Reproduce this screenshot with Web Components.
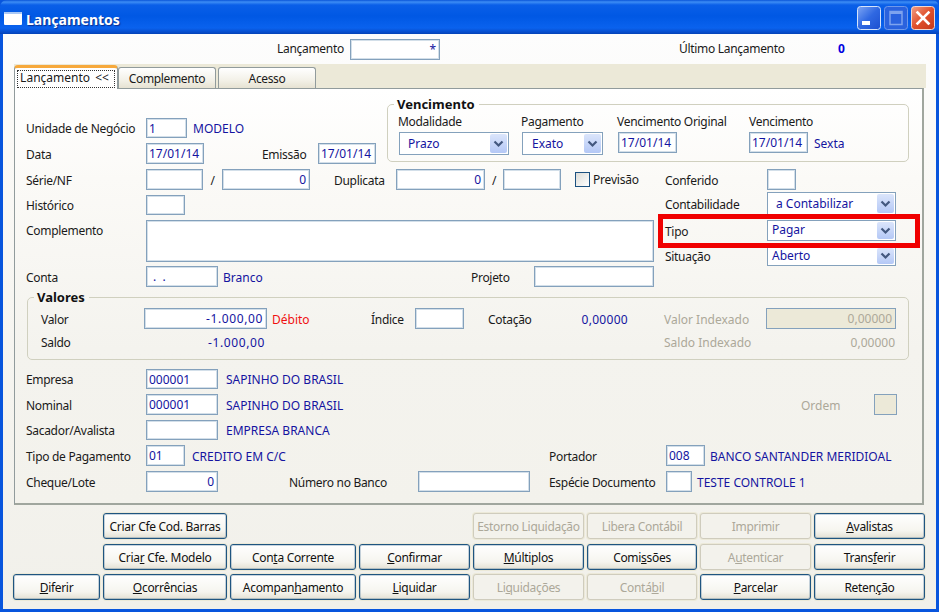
<!DOCTYPE html>
<html lang="pt">
<head>
<meta charset="utf-8">
<title>Lançamentos</title>
<style>
  html, body { margin: 0; padding: 0; background: #0855dd; }
  body { width: 939px; height: 612px; overflow: hidden; font: 12px "Noto Sans", "Liberation Sans", sans-serif; color: #1a1a1a; }
</style>
</head>
<body>
<xp-window caption="Lançamentos">
  <xp-row h="30" style="padding-left:274px">
    <xp-lbl w="73" style="padding-top:0">Lançamento</xp-lbl>
    <xp-field w="90" h="21" align="right">*</xp-field>
    <xp-lbl w="159" style="margin-left:239px;padding-top:0">Último Lançamento</xp-lbl>
    <xp-lbl tone="strong" style="padding-top:0">0</xp-lbl>
  </xp-row>

  <xp-tabs>
    <xp-tab active>Lançamento &lt;&lt;</xp-tab>
    <xp-tab>Complemento</xp-tab>
    <xp-tab>Acesso</xp-tab>
  </xp-tabs>

  <xp-panel>
    <xp-col style="flex-direction:row;height:71px">
      <xp-col w="361" style="padding-top:20px;gap:5px">
        <xp-row h="20"><xp-lbl w="120">Unidade de Negócio</xp-lbl><xp-field w="41">1</xp-field><xp-lbl tone="blue" style="margin-left:6px">MODELO</xp-lbl></xp-row>
        <xp-row h="21"><xp-lbl w="120">Data</xp-lbl><xp-field w="58">17/01/14</xp-field><xp-lbl w="56" style="margin-left:58px">Emissão</xp-lbl><xp-field w="58">17/01/14</xp-field></xp-row>
      </xp-col>
      <xp-group legend="Vencimento" w="522" h="64">
        <xp-row style="padding:1px 0 0 10px;align-items:flex-start">
          <xp-col w="123"><xp-lbl h="20">Modalidade</xp-lbl><xp-select w="110" h="23" indent="8" style="margin-left:1px">Prazo</xp-select></xp-col>
          <xp-col w="96"><xp-lbl h="20">Pagamento</xp-lbl><xp-select w="81" h="23" indent="9" style="margin-left:1px">Exato</xp-select></xp-col>
          <xp-col w="132"><xp-lbl h="20">Vencimento Original</xp-lbl><xp-field w="59" h="21" style="margin-left:1px">17/01/14</xp-field></xp-col>
          <xp-col><xp-lbl h="20">Vencimento</xp-lbl><xp-row><xp-field w="59" h="21">17/01/14</xp-field><xp-lbl tone="blue" style="margin-left:6px">Sexta</xp-lbl></xp-row></xp-col>
        </xp-row>
      </xp-group>
    </xp-col>

    <xp-col style="flex-direction:row;gap:11px">
      <xp-col w="628" style="gap:5px">
        <xp-row h="21">
          <xp-lbl w="120">Série/NF</xp-lbl><xp-field w="57"></xp-field><xp-lbl w="19" align="center">/</xp-lbl><xp-field w="88" align="right">0</xp-field>
          <xp-lbl w="62" style="margin-left:24px">Duplicata</xp-lbl><xp-field w="89" align="right">0</xp-field><xp-lbl w="18" align="center">/</xp-lbl><xp-field w="58"></xp-field>
          <xp-check style="margin-left:14px">Previsão</xp-check>
        </xp-row>
        <xp-row h="20"><xp-lbl w="120">Histórico</xp-lbl><xp-field w="39"></xp-field></xp-row>
        <xp-row h="42" style="align-items:flex-start"><xp-lbl w="120" h="20" style="margin-top:1px">Complemento</xp-lbl><xp-field w="508" h="42"></xp-field></xp-row>
        <xp-row h="21" style="margin-top:-1px">
          <xp-lbl w="120">Conta</xp-lbl><xp-field w="72" indent="6">.&nbsp;&nbsp;.</xp-field><xp-lbl tone="blue" w="248" style="margin-left:5px">Branco</xp-lbl>
          <xp-lbl w="63">Projeto</xp-lbl><xp-field w="120"></xp-field>
        </xp-row>
      </xp-col>
      <xp-col w="231">
        <xp-row h="21"><xp-lbl w="102">Conferido</xp-lbl><xp-field w="29"></xp-field></xp-row>
        <xp-row h="23" style="margin-top:2px"><xp-lbl w="102">Contabilidade</xp-lbl><xp-select w="129" h="23" indent="8">a Contabilizar</xp-select></xp-row>
        <xp-row h="21" style="margin-top:5px;position:relative"><xp-lbl w="102">Tipo</xp-lbl><xp-select w="129" h="21" indent="4" lift>Pagar</xp-select><xp-callout></xp-callout></xp-row>
        <xp-row h="20" style="margin-top:5px"><xp-lbl w="102">Situação</xp-lbl><xp-select w="129" h="20" indent="4" lift>Aberto</xp-select></xp-row>
      </xp-col>
    </xp-col>

    <xp-group legend="Valores" w="882" h="69" style="margin:4px 0 0 1px">
      <xp-col style="padding:4px 0 0 13px;gap:3px">
        <xp-row h="21">
          <xp-lbl w="103">Valor</xp-lbl><xp-field w="123" align="right" style="letter-spacing:.6px">-1.000,00</xp-field><xp-lbl tone="red" w="99" style="margin-left:5px">Débito</xp-lbl>
          <xp-lbl w="44">Índice</xp-lbl><xp-field w="49"></xp-field>
          <xp-lbl w="60" style="margin-left:24px">Cotação</xp-lbl><xp-lbl tone="blue" w="80" align="right" style="letter-spacing:.3px">0,00000</xp-lbl>
          <xp-lbl tone="off" w="102" style="margin-left:36px">Valor Indexado</xp-lbl><xp-field w="130" align="right" off>0,00000</xp-field>
        </xp-row>
        <xp-row h="20">
          <xp-lbl w="103">Saldo</xp-lbl><xp-lbl tone="blue" w="121" align="right" style="letter-spacing:.6px">-1.000,00</xp-lbl>
          <xp-lbl tone="off" w="102" style="margin-left:399px">Saldo Indexado</xp-lbl><xp-lbl tone="off" w="129" align="right">0,00000</xp-lbl>
        </xp-row>
      </xp-col>
    </xp-group>

    <xp-col style="margin-top:9px;gap:5px">
      <xp-row h="20"><xp-lbl w="120">Empresa</xp-lbl><xp-field w="72">000001</xp-field><xp-lbl tone="blue" style="margin-left:8px">SAPINHO DO BRASIL</xp-lbl></xp-row>
      <xp-row h="21"><xp-lbl w="120">Nominal</xp-lbl><xp-field w="72">000001</xp-field><xp-lbl tone="blue" w="575" style="margin-left:8px">SAPINHO DO BRASIL</xp-lbl><xp-lbl tone="off" w="73">Ordem</xp-lbl><xp-field w="23" off></xp-field></xp-row>
      <xp-row h="20"><xp-lbl w="120">Sacador/Avalista</xp-lbl><xp-field w="72"></xp-field><xp-lbl tone="blue" style="margin-left:8px">EMPRESA BRANCA</xp-lbl></xp-row>
      <xp-row h="21"><xp-lbl w="120">Tipo de Pagamento</xp-lbl><xp-field w="39">01</xp-field><xp-lbl tone="blue" w="357" style="margin-left:7px">CREDITO EM C/C</xp-lbl><xp-lbl w="117">Portador</xp-lbl><xp-field w="39">008</xp-field><xp-lbl tone="blue" style="margin-left:5px">BANCO SANTANDER MERIDIOAL</xp-lbl></xp-row>
      <xp-row h="21"><xp-lbl w="120">Cheque/Lote</xp-lbl><xp-field w="72" align="right">0</xp-field><xp-lbl w="129" style="margin-left:71px">Número no Banco</xp-lbl><xp-field w="112"></xp-field><xp-lbl w="117" style="margin-left:19px">Espécie Documento</xp-lbl><xp-field w="26"></xp-field><xp-lbl tone="blue" style="margin-left:5px">TESTE CONTROLE 1</xp-lbl></xp-row>
    </xp-col>
  </xp-panel>

  <xp-actions>
    <xp-btn style="grid-column:2">Criar Cfe Cod. Barras</xp-btn>
    <xp-btn off style="grid-column:5">Estorno Liquidação</xp-btn>
    <xp-btn off>Libera Contábil</xp-btn>
    <xp-btn off>Imprimir</xp-btn>
    <xp-btn><u>A</u>valistas</xp-btn>

    <xp-btn style="grid-column:2">Cria<u>r</u> Cfe. Modelo</xp-btn>
    <xp-btn>Con<u>t</u>a Corrente</xp-btn>
    <xp-btn><u>C</u>onfirmar</xp-btn>
    <xp-btn><u>M</u>últiplos</xp-btn>
    <xp-btn>Comi<u>s</u>sões</xp-btn>
    <xp-btn off>A<u>u</u>tenticar</xp-btn>
    <xp-btn>Trans<u>f</u>erir</xp-btn>

    <xp-btn><u>D</u>iferir</xp-btn>
    <xp-btn><u>O</u>corrências</xp-btn>
    <xp-btn>Acompan<u>h</u>amento</xp-btn>
    <xp-btn><u>L</u>iquidar</xp-btn>
    <xp-btn off>Li<u>q</u>uidações</xp-btn>
    <xp-btn off>Contá<u>b</u>il</xp-btn>
    <xp-btn><u>P</u>arcelar</xp-btn>
    <xp-btn>Reten<u>ç</u>ão</xp-btn>
  </xp-actions>
</xp-window>

<script>
class XpBase extends HTMLElement {
  constructor() {
    super();
    this.shadowDOM = this.attachShadow({ mode: "open" });
  }

  connectedCallback() {
    if (this.hasAttribute("w")) this.style.width = this.getAttribute("w") + "px";
    if (this.hasAttribute("h")) this.style.height = this.getAttribute("h") + "px";
    this.render();
  }
}

class XpWindow extends XpBase {
  render() {
    this.shadowDOM.innerHTML = `
      <style>
        :host { display: flex; flex-direction: column; width: 939px; height: 612px; box-sizing: border-box; }
        .bar {
          height: 34px; flex: none; display: flex; align-items: center; padding: 2px 4px 0 4px; box-sizing: border-box;
          border-radius: 7px 7px 0 0;
          background: linear-gradient(#0a55d8 0, #3d8df5 2px, #0a5fe8 5px, #0058e4 16px, #0a62ee 28px, #0648c4 33px, #0342b4 34px);
        }
        .icon { width: 18px; height: 13px; flex: none; }
        .cap { margin: 2px 0 0 4px; font: bold 14px "Noto Sans", sans-serif; color: #fff; text-shadow: 1px 1px 1px #0a2f8f; flex: 1; }
        .ctl { width: 24px; height: 24px; margin-left: 3px; flex: none; display: block; }
        .client {
          flex: 1; margin: 0 3px 3px 3px; display: flex; flex-direction: column;
          background: linear-gradient(#fdfdfd 0, #faf9f6 120px, #f4f3ee 400px, #f1f0ea 100%);
        }
      </style>
      <div class="bar">
        <svg class="icon" viewBox="0 0 18 13"><rect width="18" height="13" rx="1" fill="#fff"/><rect width="18" height="2" rx="1" fill="#a9c8f5"/></svg>
        <span class="cap">${this.getAttribute("caption")}</span>
        <svg class="ctl" viewBox="0 0 24 24">
          <defs><linearGradient id="m" x1="0" y1="0" x2="1" y2="1"><stop offset="0" stop-color="#7ea6f4"/><stop offset=".5" stop-color="#2f68e2"/><stop offset="1" stop-color="#1c4fd0"/></linearGradient></defs>
          <rect x=".5" y=".5" width="23" height="23" rx="3" fill="url(#m)" stroke="#d6e4fb"/><rect x="5" y="15" width="8" height="4" fill="#fff"/>
        </svg>
        <svg class="ctl" viewBox="0 0 24 24">
          <rect x=".5" y=".5" width="23" height="23" rx="3" fill="#2a62de" stroke="#6f98ea"/><rect x="6" y="5.5" width="12" height="13" fill="none" stroke="#7ea3ee" stroke-width="1.5"/><rect x="6" y="5" width="12" height="3" fill="#7ea3ee"/>
        </svg>
        <svg class="ctl" viewBox="0 0 24 24">
          <defs><linearGradient id="c" x1="0" y1="0" x2="1" y2="1"><stop offset="0" stop-color="#f0a088"/><stop offset=".5" stop-color="#e0502c"/><stop offset="1" stop-color="#c33a1c"/></linearGradient></defs>
          <rect x=".5" y=".5" width="23" height="23" rx="3" fill="url(#c)" stroke="#f0d8d0"/><path d="M6.5 6.5 17.5 17.5M17.5 6.5 6.5 17.5" stroke="#fff" stroke-width="2.6" stroke-linecap="square"/>
        </svg>
      </div>
      <div class="client"><slot></slot></div>`;
  }
}

class XpRow extends XpBase {
  render() {
    this.shadowDOM.innerHTML = `
      <style>:host { display: flex; align-items: center; flex: none; box-sizing: border-box; }</style>
      <slot></slot>`;
  }
}

class XpCol extends XpBase {
  render() {
    this.shadowDOM.innerHTML = `
      <style>:host { display: flex; flex-direction: column; flex: none; box-sizing: border-box; }</style>
      <slot></slot>`;
  }
}

class XpLbl extends XpBase {
  render() {
    this.shadowDOM.innerHTML = `
      <style>
        :host { display: block; flex: none; box-sizing: border-box; padding-top: 2px; white-space: nowrap; line-height: 16px; color: #1a1a1a; letter-spacing: -.3px; }
        :host([tone=blue]) { color: #1414a0; letter-spacing: 0; }
        :host([tone=red]) { color: #f01010; letter-spacing: 0; }
        :host([tone=off]) { color: #aca899; letter-spacing: 0; }
        :host([tone=strong]) { color: #0000e0; font-weight: bold; }
        :host([align=right]) { text-align: right; }
        :host([align=center]) { text-align: center; }
      </style>
      <slot></slot>`;
  }
}

class XpField extends XpBase {
  render() {
    const indent = this.getAttribute("indent") || 2;
    this.shadowDOM.innerHTML = `
      <style>
        :host {
          display: block; flex: none; box-sizing: border-box; height: 100%; background: #fff; color: #1414a0;
          border: 1px solid #84a1bc; box-shadow: inset 0 0 0 1px #d3dfe9; white-space: nowrap; overflow: hidden;
          padding: 1px 3px 0 ${indent}px; line-height: 18px;
        }
        :host([align=right]) { text-align: right; }
        :host([off]) { background: #ece9d8; color: #aca899; box-shadow: none; }
      </style>
      <slot></slot>`;
  }
}

class XpSelect extends XpBase {
  render() {
    this.shadowDOM.innerHTML = `
      <style>
        :host {
          display: flex; flex: none; box-sizing: border-box; align-items: center; background: #fff; color: #1414a0;
          border: 1px solid #84a1bc; padding: 1px 1px 1px ${this.getAttribute("indent") || 4}px;
        }
        .text { flex: 1; white-space: nowrap; }
        :host([lift]) .text { padding-bottom: 2px; }
        .arrow {
          width: 17px; height: 100%; border-radius: 2px; flex: none;
          background: linear-gradient(#dbe5fb, #b4c8f6);
          display: flex; align-items: center; justify-content: center;
        }
        svg { width: 11px; height: 8px; display: block; }
      </style>
      <span class="text"><slot></slot></span>
      <span class="arrow"><svg viewBox="0 0 11 8"><path d="M1.5 1.5 5.5 5.5 9.5 1.5" fill="none" stroke="#43587f" stroke-width="2.2"/></svg></span>`;
  }
}

class XpCheck extends XpBase {
  render() {
    this.shadowDOM.innerHTML = `
      <style>
        :host { display: flex; flex: none; align-items: center; white-space: nowrap; letter-spacing: -.2px; }
        .box { width: 15px; height: 15px; box-sizing: border-box; border: 1px solid #1c5180; background: linear-gradient(135deg, #dcdcd7, #fff); margin-right: 3px; }
      </style>
      <span class="box"></span><slot></slot>`;
  }
}

class XpTabs extends XpBase {
  render() {
    this.shadowDOM.innerHTML = `
      <style>
        :host { display: flex; flex: none; height: 24px; margin: 0 10px 0 11px; background: #ece9d8; align-items: flex-end; }
      </style>
      <slot></slot>`;
  }
}

class XpTab extends XpBase {
  render() {
    this.shadowDOM.innerHTML = `
      <style>
        :host {
          display: flex; flex: none; box-sizing: border-box; width: 98px; height: 21px; margin-right: 2px; align-items: center; justify-content: center;
          border: 1px solid #919b9c; border-bottom: 0; border-radius: 3px 3px 0 0;
          background: linear-gradient(#fff, #f3f1e8 60%, #e6e2d2); white-space: nowrap; letter-spacing: -.35px;
        }
        :host([active]) {
          width: 104px; height: 24px; margin: 0 0 -1px 0; position: relative; z-index: 1; letter-spacing: 0; word-spacing: 2px;
          background: #fff; border-top: 3px solid #f7a93c; border-radius: 4px 4px 0 0;
        }
        .focus { padding: 0 2px; }
        :host([active]) .focus { display: flex; align-items: center; justify-content: center; width: 98px; height: 18px; box-sizing: border-box; border: 1px dotted #333; padding: 0 3px 2px 0; }
      </style>
      <span class="focus"><slot></slot></span>`;
  }
}

class XpPanel extends XpBase {
  render() {
    this.shadowDOM.innerHTML = `
      <style>
        :host {
          display: block; flex: none; box-sizing: border-box; width: 910px; height: 417px; margin-left: 11px; padding: 9px 0 0 11px;
          border: 1px solid #919b9c; border-right: 2px solid #a0a69e; border-bottom: 2px solid #a0a69e;
          background: linear-gradient(#fff 0, #fbfaf7 90px, #f4f3ee 260px, #f3f2ec 100%);
        }
      </style>
      <slot></slot>`;
  }
}

class XpGroup extends XpBase {
  render() {
    this.shadowDOM.innerHTML = `
      <style>
        :host { display: block; flex: none; box-sizing: border-box; }
        fieldset { margin: 0; padding: 0; height: 100%; box-sizing: border-box; border: 1px solid #d0d0bf; border-radius: 5px; }
        legend { margin-left: 6px; padding: 0 4px 0 3px; font-size: 13px; font-weight: bold; line-height: 13px; color: #111; }
      </style>
      <fieldset><legend>${this.getAttribute("legend")}</legend><slot></slot></fieldset>`;
  }
}

class XpCallout extends XpBase {
  render() {
    this.shadowDOM.innerHTML = `
      <style>
        :host { position: absolute; left: -7px; right: -24px; top: -6px; bottom: -7px; border: 5px solid #f00000; z-index: 2; pointer-events: none; }
      </style>`;
  }
}

class XpActions extends XpBase {
  render() {
    this.shadowDOM.innerHTML = `
      <style>
        :host {
          display: grid; flex: none; margin: 8px 0 0 10px; column-gap: 3px; row-gap: 4px;
          grid-template-columns: 87px 124px 126px 111px 111px 110px 111px 111px;
          grid-template-rows: 27px 26px 26px;
        }
      </style>
      <slot></slot>`;
  }
}

class XpBtn extends XpBase {
  render() {
    this.shadowDOM.innerHTML = `
      <style>
        :host {
          display: flex; align-items: center; justify-content: center; box-sizing: border-box; height: 26px; white-space: nowrap;
          border: 1px solid #1f5580; border-radius: 3px; color: #111; letter-spacing: -.3px;
          background: linear-gradient(#fff, #f6f5ef 70%, #e4e1d4);
          box-shadow: inset 0 0 0 1px rgba(31,85,128,.25), 0 0 0 1px #ece9d8;
        }
        :host([off]) { border-color: #cfccbd; color: #aca899; background: #f3f2ec; box-shadow: 0 0 0 1px #ece9d8; }
      </style>
      <span><slot></slot></span>`;
  }
}

customElements.define("xp-window", XpWindow);
customElements.define("xp-row", XpRow);
customElements.define("xp-col", XpCol);
customElements.define("xp-lbl", XpLbl);
customElements.define("xp-field", XpField);
customElements.define("xp-select", XpSelect);
customElements.define("xp-check", XpCheck);
customElements.define("xp-tabs", XpTabs);
customElements.define("xp-tab", XpTab);
customElements.define("xp-panel", XpPanel);
customElements.define("xp-group", XpGroup);
customElements.define("xp-callout", XpCallout);
customElements.define("xp-actions", XpActions);
customElements.define("xp-btn", XpBtn);
</script>
</body>
</html>
